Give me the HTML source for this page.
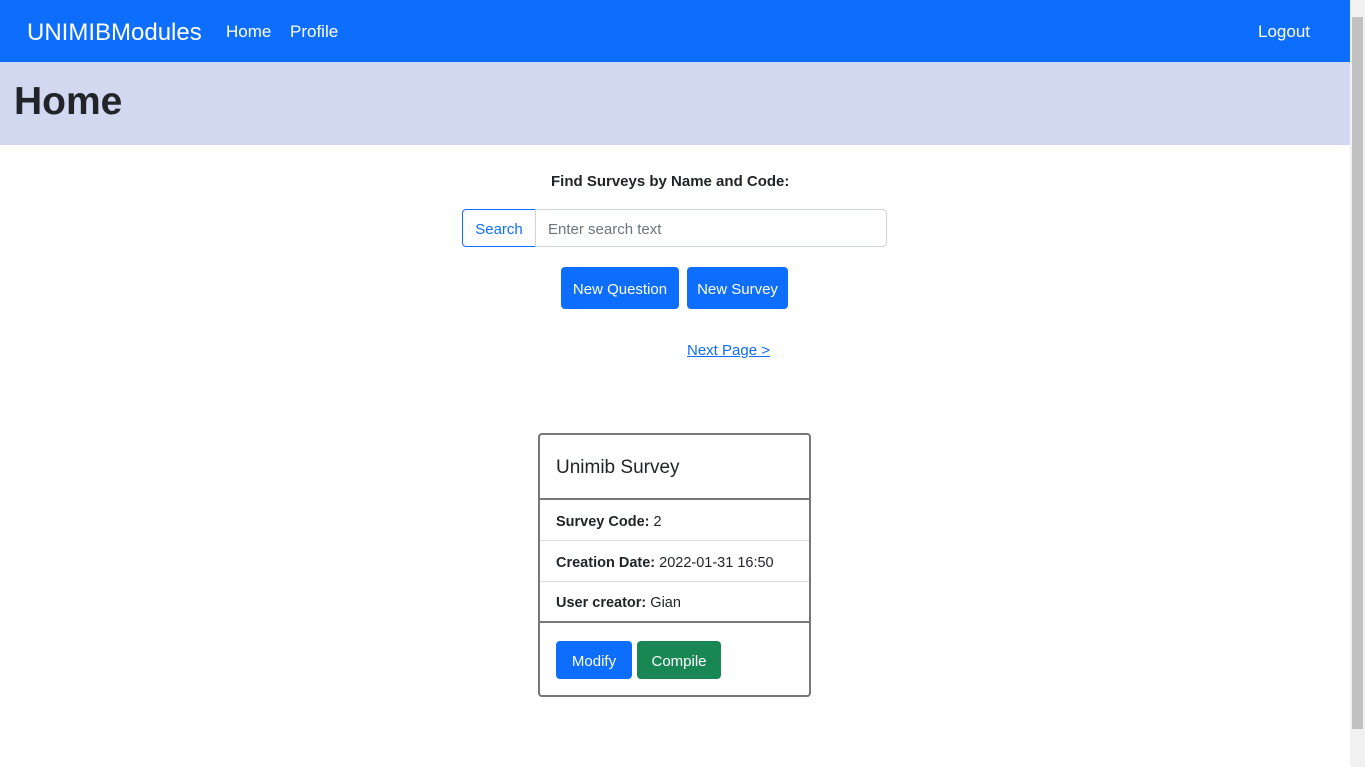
<!DOCTYPE html>
<html><head><style>
*{box-sizing:border-box;margin:0;padding:0}
body{width:1365px;height:767px;overflow:hidden;font-family:"Liberation Sans",sans-serif;color:#212529;background:#fff;position:relative}
.a{position:absolute;white-space:nowrap}
.nav{left:0;top:0;width:1350px;height:62px;background:#0d6efd}
.hd{left:0;top:62px;width:1350px;height:83px;background:#d1d8f0}
.sb{left:1350px;top:0;width:15px;height:767px;background:#f1f1f1}
.th{left:1352px;top:17px;width:11px;height:712px;background:#c1c1c1}
.btn{background:#0d6efd;color:#fff;border-radius:4px;font-size:15px;display:flex;align-items:center;justify-content:center}
.card{left:538px;top:433px;width:273px;height:264px;border:2px solid #777;border-radius:4px}
.row{left:0;width:269px;font-size:14.5px;padding-left:16px;padding-top:3px;display:flex;align-items:center}
</style></head><body>
<div class="a nav"></div>
<div class="a" style="left:27px;top:19px;font-size:24px;color:#fff">UNIMIBModules</div>
<div class="a" style="left:226px;top:22px;font-size:17px;color:#fff">Home</div>
<div class="a" style="left:290px;top:22px;font-size:17px;color:#fff">Profile</div>
<div class="a" style="left:1258px;top:22px;font-size:17px;color:#fff">Logout</div>
<div class="a hd"></div>
<div class="a" style="left:14px;top:80px;font-size:39px;font-weight:bold;color:#212529">Home</div>
<div class="a" style="left:551px;top:173px;font-size:15px;font-weight:bold">Find Surveys by Name and Code:</div>
<div class="a" style="left:462px;top:209px;width:74px;height:38px;border:1px solid #0d6efd;border-radius:4px 0 0 4px;color:#0d6efd;font-size:15px;display:flex;align-items:center;justify-content:center;padding-top:2px">Search</div>
<div class="a" style="left:535px;top:209px;width:352px;height:38px;border:1px solid #ced4da;border-radius:0 4px 4px 0;color:#6c757d;font-size:15px;padding-left:12px;padding-top:2px;display:flex;align-items:center">Enter search text</div>
<div class="a btn" style="left:561px;top:267px;width:118px;height:42px;padding-top:2px">New Question</div>
<div class="a btn" style="left:687px;top:267px;width:101px;height:42px;padding-top:2px">New Survey</div>
<div class="a" style="left:687px;top:342px;font-size:15px;color:#0d6efd;text-decoration:underline">Next Page &gt;</div>
<div class="a card">
<div class="a row" style="top:0;height:65px;font-size:19px;border-bottom:2px solid #777">Unimib Survey</div>
<div class="a row" style="top:65px;height:41px;border-bottom:1px solid #ddd"><b>Survey Code:</b>&nbsp;2</div>
<div class="a row" style="top:106px;height:41px;border-bottom:1px solid #ddd"><b>Creation Date:</b>&nbsp;2022-01-31 16:50</div>
<div class="a row" style="top:147px;height:41px;border-bottom:2px solid #777"><b>User creator:</b>&nbsp;Gian</div>
<div class="a btn" style="left:16px;top:206px;width:76px;height:38px;padding-top:2px">Modify</div>
<div class="a btn" style="left:97px;top:206px;width:84px;height:38px;background:#198754;padding-top:2px">Compile</div>
</div>
<div class="a sb"></div><div class="a th"></div>
</body></html>
